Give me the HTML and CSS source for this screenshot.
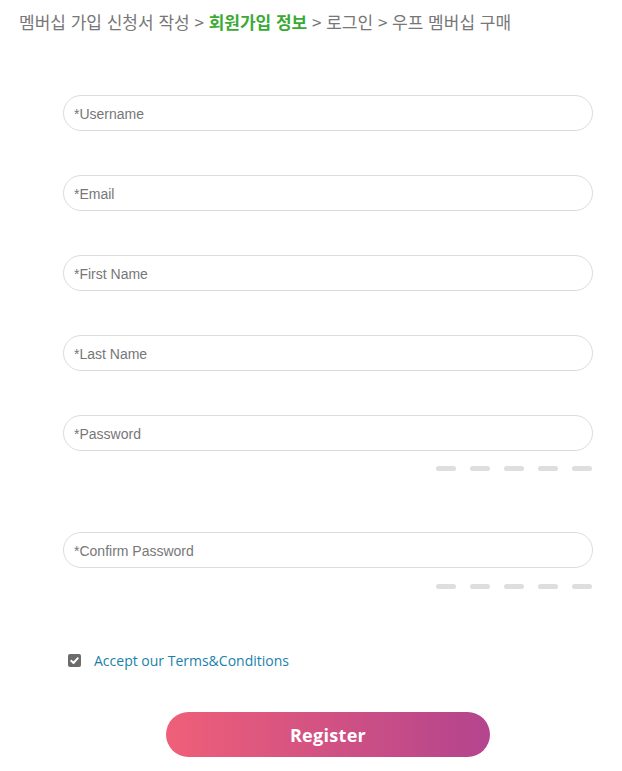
FILE: index.html
```html
<!DOCTYPE html>
<html lang="ko">
<head>
<meta charset="utf-8">
<title>회원가입 정보</title>
<link rel="stylesheet" href="styles.css">
</head>
<body>
<div class="crumbs">멤버십 가입 신청서 작성 &gt; <strong class="current">회원가입 정보</strong> &gt; 로그인 &gt; 우프 멤버십 구매</div>
<form class="form">
  <input class="field" type="text" placeholder="*Username">
  <input class="field" type="text" placeholder="*Email">
  <input class="field" type="text" placeholder="*First Name">
  <input class="field" type="text" placeholder="*Last Name">
  <div class="pw-group">
    <input class="field" type="password" placeholder="*Password">
    <div class="strength"><span></span><span></span><span></span><span></span><span></span></div>
  </div>
  <div class="pw-group confirm">
    <input class="field" type="password" placeholder="*Confirm Password">
    <div class="strength"><span></span><span></span><span></span><span></span><span></span></div>
  </div>
  <label class="terms"><span class="check"><svg viewBox="0 0 13 13" width="13" height="13"><path d="M3.2 6.8 L5.5 9 L9.8 4.2" fill="none" stroke="#fff" stroke-width="1.9" stroke-linecap="round" stroke-linejoin="round"/></svg></span>Accept our Terms&amp;Conditions</label>
  <div class="actions"><button type="button" class="register">Register</button></div>
</form>
</body>
</html>
```
FILE: styles.css
```css
* { box-sizing: border-box; }
html, body { margin: 0; background: #fff; }
body { width: 622px; }
.crumbs {
  padding: 10px 0 0 19px;
  height: 95px;
  font-family: "Noto Sans CJK KR", "Noto Sans", sans-serif;
  font-size: 17px;
  line-height: 24px;
  color: #777;
}
.crumbs .current { color: #3aaa35; font-weight: 700; }
.form {
  display: flex;
  flex-direction: column;
  margin-left: 63px;
  width: 530px;
}
.field {
  display: block;
  width: 530px;
  height: 36px;
  border: 1px solid #dcdcdc;
  border-radius: 18px;
  padding: 2px 10px 0;
  font-family: "Liberation Sans", Arial, sans-serif;
  font-size: 14px;
  color: #555;
  background: #fff;
  outline: none;
  margin-bottom: 44px;
}
.field::placeholder { color: #777; }
.pw-group .field { margin-bottom: 15px; }
.strength {
  display: flex;
  justify-content: flex-end;
  gap: 14px;
  margin-right: 1px;
  margin-bottom: 61px;
}
.strength span {
  width: 20px;
  height: 5px;
  border-radius: 3px;
  background: #dedede;
}
.confirm .field { margin-bottom: 16px; }
.confirm .strength { margin-bottom: 63px; }
.terms {
  display: flex;
  align-items: center;
  margin-left: 5px;
  height: 16px;
  font-family: "Open Sans", sans-serif;
  font-size: 14px;
  color: #1b7fad;
}
.check {
  display: inline-flex;
  width: 13px;
  height: 13px;
  border-radius: 2px;
  background: #6b6b6b;
  margin-right: 13px;
}
.actions {
  display: flex;
  justify-content: center;
  margin-top: 44px;
}
.register {
  width: 324px;
  height: 45px;
  border: 0;
  border-radius: 23px;
  background: linear-gradient(90deg, #ef5f78 0%, #b3448e 100%);
  color: #fff;
  font-family: "Open Sans", sans-serif;
  font-weight: 700;
  font-size: 18px;
  letter-spacing: 0.3px;
}
```
